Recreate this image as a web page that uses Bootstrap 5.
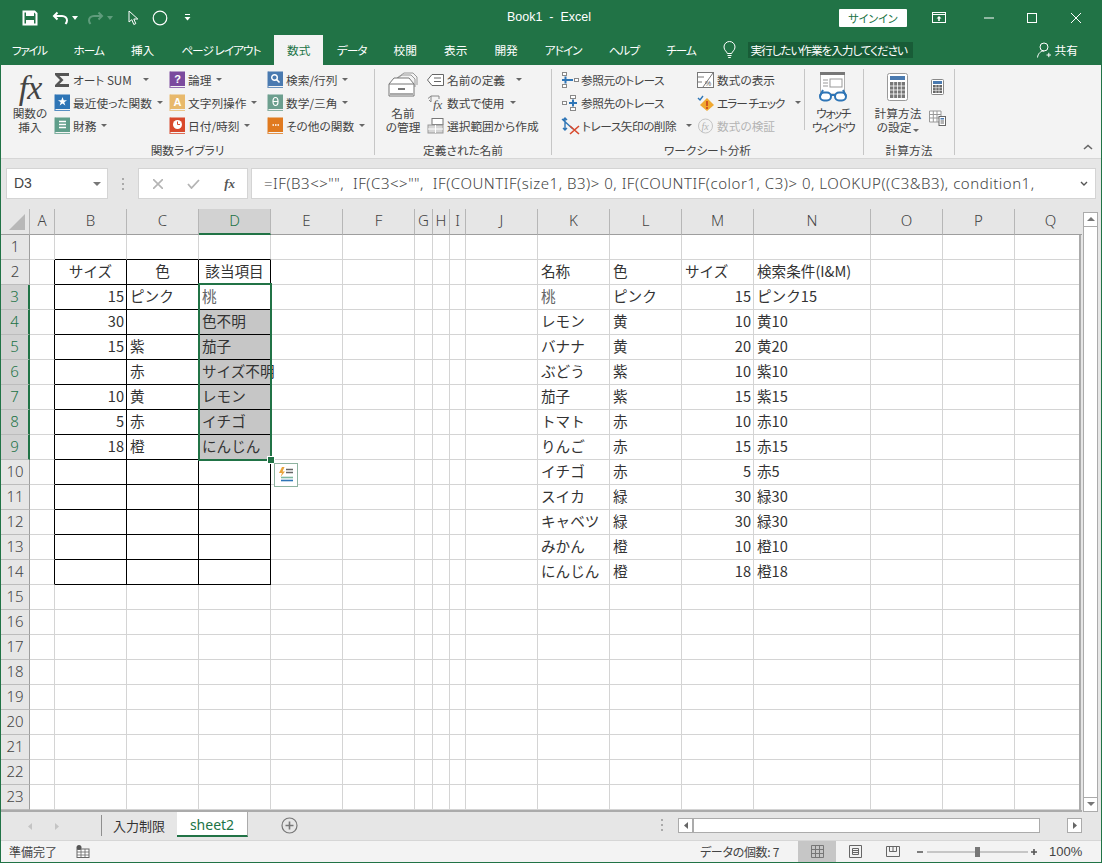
<!DOCTYPE html>
<html lang="ja">
<head>
<meta charset="UTF-8">
<title>Book1 - Excel</title>
<link href="https://cdn.jsdelivr.net/npm/bootstrap@5.3.0/dist/css/bootstrap.min.css" rel="stylesheet">
<style>
html, body { height: 100%; overflow: hidden; }
body { font-family: "Noto Sans CJK JP", sans-serif; font-size: 12px; color: #333; background: #f3f3f3; }
svg { display: block; flex: none; }

.xl-window { width: 1102px; height: 863px; border: solid #217346; border-width: 0 1px 1px 1px; display: flex; flex-direction: column; }

/* title bar */
.xl-title { height: 35px; background: #217346; color: #fff; margin: 0 -1px; position: relative; }
.qa-save { margin-left: 22px; }
.qa-undo { margin-left: 14px; }
.qa-caret { margin-left: 3px; }
.qa-redo { margin-left: 9px; }
.qa-cursor { margin-left: 15px; }
.qa-circle { margin-left: 13px; }
.qa-more { margin-left: 16px; }
.xl-doc { position: absolute; left: 0; right: 4px; top: 8px; text-align: center; font-family: "Liberation Sans", sans-serif; font-size: 12.5px; }
.xl-signin { margin-left: auto; width: 68px; height: 18px; background: #fff; color: #217346; text-align: center; line-height: 18px; font-size: 11px; font-feature-settings: "palt"; border-radius: 1px; }
.win-opt { margin-left: 25px; }
.win-min { margin-left: 38px; }
.win-max { margin-left: 33px; }
.win-close { margin-left: 34px; margin-right: 21px; }

/* tabs */
.xl-tabs { height: 30px; background: #217346; color: #fff; margin: 0 -1px; font-size: 11.7px; font-feature-settings: "palt"; align-items: stretch; }
.xl-tab { padding: 0 13.5px; line-height: 30px; white-space: nowrap; }
.xl-tab-first { margin-left: -1.5px; letter-spacing: -1.5px; }
.xl-tab-kana { letter-spacing: -1px; }
.xl-tab-on { background: #f3f3f3; color: #217346; padding: 0 13px; }
.xl-bulb { margin: 6px 12px 0 14px; }
.xl-tell { background: #185c37; height: 16px; line-height: 16px; margin: 7px 0 0 0; padding: 0 2px; width: 165px; white-space: nowrap; letter-spacing: -1.1px; }
.xl-share { margin-left: auto; margin-right: 24px; line-height: 30px; }
.xl-share svg { margin: 7px 4px 0 0; }

/* ribbon */
.xl-ribbon { height: 93px; background: #f3f3f3; font-size: 11.7px; font-feature-settings: "palt"; color: #444; white-space: nowrap; }
.rb-group { display: flex; flex-direction: column; }
.rb-g1 { width: 373px; }
.rb-g2 { width: 176px; }
.rb-g3 { width: 311px; }
.rb-g4 { width: 90px; }
.rb-sep { width: 1px; height: 86px; margin-top: 4px; background: #c6c6c6; flex: none; }
.rb-sep-short { width: 1px; height: 61px; margin-top: 1px; background: #c6c6c6; flex: none; }
.rb-body { height: 76px; padding-top: 3px; display: flex; }
.rb-label { height: 17px; line-height: 17px; text-align: center; color: #444; }
.rb-big { display: flex; flex-direction: column; align-items: center; line-height: 14px; flex: none; }
.rb-col { display: flex; flex-direction: column; flex: none; }
.rb-item { height: 23px; display: flex; align-items: center; gap: 3px; }
.rb-dim { color: #b4b4b4; }
.rb-tight { letter-spacing: -1px; }
.caret-dn { display: inline-block; width: 0; height: 0; border: 3px solid transparent; border-top: 3px solid #666; border-bottom: 0; margin-left: 2px; }
.rb-fx { font-family: "Liberation Serif", serif; font-style: italic; font-size: 34px; line-height: 39px; height: 38px; color: #444; letter-spacing: -1px; }
.rb-b1 { width: 42px; margin: 0 3px 0 8px; }
.rb-c1 { width: 115px; }
.rb-c2 { width: 98px; }
.rb-b2 { width: 52px; margin: 0 0 0 2px; }
.rb-c3 { margin-left: -2px; }
.rb-b2 svg { margin: 4px 0 8px; }
.rb-c4 { width: 136px; margin-left: 9px; }
.rb-c4 .rb-item { gap: 2px; letter-spacing: -.5px; }
.rb-c5 { width: 107px; }
.rb-b3 { width: 56px; letter-spacing: -1.5px; }
.rb-b3 svg { margin: 4px 0; }
.rb-b4 { width: 62px; margin-left: 3px; }
.rb-b4 svg { margin: 5px 0 4px; }
.rb-c6 { padding-top: 11px; gap: 15px; align-items: center; width: 17px; }
.rb-book-purple { color: #7b4a9e; }
.rb-book-blue { color: #2e75b6; }
.rb-book-teal { color: #5f9e8a; }
.rb-book-tan { color: #e8b96c; }
.rb-book-red { color: #d8492c; }
.rb-book-slate { color: #4a7ab0; }
.rb-book-sage { color: #6d9f8f; }
.rb-book-orange { color: #e07a1f; }
.rb-glyph { fill: #fff; font-size: 11px; font-family: "Liberation Sans", sans-serif; font-weight: 700; text-anchor: middle; }
.rb-close { margin: 79px 0 0 auto; }
.rb-close svg { margin-right: 8px; }

/* formula bar */
.xl-band { height: 10px; background: #e6e6e6; border-top: 1px solid #d6d6d6; }
.xl-fbar { height: 32px; background: #e6e6e6; }
.fb-box { background: #fff; border: 1px solid #d4d4d4; height: 31px; }
.fb-name { width: 102px; margin-left: 5px; padding: 0 6px 0 7px; font-family: "Liberation Sans", sans-serif; font-size: 14px; color: #444; }
.fb-grip { width: 30px; }
.fb-grip svg { margin: auto; }
.fb-btns { width: 110px; padding: 0 10px; color: #aaa; }
.fb-fx { margin-left: auto; margin-right: 2px; font-family: "Liberation Serif", serif; font-style: italic; font-weight: 700; font-size: 13px; color: #555; }
.fb-input { width: 845px; margin-left: 3px; padding: 0 7px 0 12px; color: #444; white-space: nowrap; overflow: hidden; }
.fb-text { flex: 1; overflow: hidden; font-family: "Noto Sans", sans-serif; font-size: 15px; font-weight: 300; letter-spacing: .52px; }
.fb-gap { height: 9px; background: #e6e6e6; }

/* sheet */
.xl-body { height: 603px; background: #e6e6e6; }
.xl-grid-wrap { width: 1081px; height: 603px; overflow: hidden; position: relative; flex: none; }
.xl-sheet { table-layout: fixed; border-collapse: separate; border-spacing: 0; width: 1086px; font-size: 14.6px; color: #333; }
.xl-sheet td, .xl-sheet th { height: 25px; padding: 0 0 2px 3px; font-weight: 400; border: solid #d4d4d4; border-width: 0 1px 1px 0; background: #fff; white-space: nowrap; overflow: visible; line-height: 22px; }
.xl-sheet thead th { height: 26px; background: #e6e6e6; border-color: #b6b6b6 #b6b6b6 #9e9e9e; font-size: 15px; text-align: center; padding: 0 0 3px; color: #444; font-family: "Noto Sans", sans-serif; font-weight: 300; }
.xl-sheet tbody th { background: #e6e6e6; border-color: #bcbcbc #9e9e9e #bcbcbc; text-align: center; padding: 0 0 2px; font-size: 15px; color: #444; font-family: "Noto Sans", sans-serif; font-weight: 300; }
.xl-sheet thead th.xh-corner { position: relative; }
.xh-tri { position: absolute; right: 4px; bottom: 4px; width: 0; height: 0; border: solid transparent; border-width: 0 0 16px 16px; border-bottom-color: #b8b8b8; }
.xl-sheet thead th.xh-on { background: #d2d2d2; color: #217346; border-bottom: 2px solid #217346; padding-bottom: 2px; }
.xl-sheet tbody th.xh-on { background: #d2d2d2; color: #217346; border-right: 2px solid #217346; }
.xl-sheet td.xc-num { text-align: right; padding: 0 2px 2px 0; }
.xl-sheet td.xc-mid { text-align: center; padding: 0 0 2px; }
.xl-sheet td.xc-box { border-right-color: #000; border-bottom-color: #000; }
.xl-sheet td.xc-edge-r { border-right-color: #000; }
.xl-sheet td.xc-edge-b { border-bottom-color: #000; }
.xl-sheet td.xc-sel { background: #c6c6c6; }
.xl-sheet td.xc-soft { color: #666; }
.sel-frame { position: absolute; left: 197px; top: 74px; width: 74px; height: 178px; border: 2px solid #217346; pointer-events: none; }
.sel-grip { position: absolute; left: 266px; top: 247px; width: 8px; height: 8px; background: #217346; border: 1px solid #fff; }
.sel-tag { position: absolute; left: 273px; top: 254px; width: 24px; height: 24px; background: #fff; border: 1px solid #8fb3a0; padding: 3px; }
.grid-end-r { position: absolute; right: 0; top: 26px; bottom: 0; width: 3px; background: #e6e6e6; border-left: 2px solid #ababab; }
.grid-end-b { position: absolute; left: 0; right: 0; bottom: 0; height: 2px; background: #ababab; }
.xl-vbar { width: 15px; margin-left: 1px; height: 600px; margin-top: 3px; background: #fff; border: solid #ababab; border-width: 0 1px 0 1px; position: relative; }
.sb-up, .sb-dn { height: 15px; background: #fff; border: 1px solid #ababab; margin: 0 -1px; }
.sb-up svg, .sb-dn svg { margin: 4px auto; }
.sb-thumb { flex: 1; }

/* sheet tabs */
.xl-sheetbar { height: 28px; background: #e6e6e6; }
.st-nav { width: 100px; padding-left: 27px; gap: 23px; align-self: center; }
.st-tab { padding: 0 11px; line-height: 27px; border-left: 1px solid #8f8f8f; height: 21px; margin-top: 3px; font-size: 13px; width: 76px; white-space: nowrap; }
.st-tab span { position: relative; top: -3px; }
.st-on { height: 25px; margin: 0; width: 71px; padding: 0; text-align: center; background: #fff; color: #217346; border-bottom: 2px solid #217346; border-right: 1px solid #ababab; font-family: "Noto Sans", sans-serif; font-size: 14px; line-height: 25px; }
.st-plus { margin: 5px 0 0 33px; }
.st-grip { margin: 7px 0 0 363px; }
.st-hbar { width: 404px; height: 15px; margin: 6px 0 0 14px; }
.sb-box { width: 15px; height: 15px; background: #fff; border: 1px solid #ababab; flex: none; }
.sb-box svg { margin: 3px auto; }
.sb-thumbh { width: 347px; height: 15px; background: #fff; border: 1px solid #ababab; flex: none; }

/* status */
.xl-status { height: 22px; background: #f3f3f3; border-top: 1px solid #d6d6d6; font-size: 12px; font-feature-settings: "palt"; color: #444; line-height: 21px; white-space: nowrap; }
.su-ready { margin-left: 8px; width: 67px; }
.su-count { margin-left: 610px; width: 98px; letter-spacing: -.3px; }
.su-view { width: 38px; height: 21px; display: flex; align-items: center; justify-content: center; }
.su-view-on { background: #c6c6c6; }
.su-zoom { margin-left: 5px; }
.su-pct { margin-left: 10px; font-family: "Liberation Sans", sans-serif; font-size: 13px; }
</style>
</head>
<body>
<svg width="0" height="0" class="position-absolute">
  <symbol id="bk" viewBox="0 0 16 18"><rect x="1" y="0.5" width="15" height="14.5" fill="currentColor"/><path d="M1 0.5V16.5H16" fill="none" stroke="currentColor" stroke-width="1.2" opacity=".8"/></symbol>
</svg>

<div class="xl-window">
  <!-- title bar -->
  <div class="xl-title d-flex align-items-center">
    <svg class="qa-save" width="16" height="16" viewBox="0 0 16 16"><path d="M1.5 1.5H12.5L14.5 3.5V14.5H1.5Z" fill="none" stroke="#fff" stroke-width="2"/><rect x="4" y="2" width="8" height="4" fill="#fff"/><rect x="4" y="10" width="8" height="4" fill="#fff"/></svg>
    <svg class="qa-undo" width="17" height="16" viewBox="0 0 17 16"><path d="M5.5 2.5L2 6L5.5 9.5M2.5 6H10C13 6 15 8 15 10.5C15 12 14.3 13 13.5 14" fill="none" stroke="#fff" stroke-width="2"/></svg>
    <svg class="qa-caret" width="6" height="4" viewBox="0 0 6 4"><path d="M0 0H6L3 4Z" fill="#fff"/></svg>
    <svg class="qa-redo" width="17" height="16" viewBox="0 0 17 16"><path d="M11.5 2.5L15 6L11.5 9.5M14.5 6H7C4 6 2 8 2 10.5C2 12 2.7 13 3.5 14" fill="none" stroke="#5f9c7c" stroke-width="2"/></svg>
    <svg class="qa-caret" width="6" height="4" viewBox="0 0 6 4"><path d="M0 0H6L3 4Z" fill="#5f9c7c"/></svg>
    <svg class="qa-cursor" width="11" height="16" viewBox="0 0 11 16"><path d="M1 1V12L3.8 9.7L5.8 14.5L7.8 13.6L5.8 9H9.8Z" fill="none" stroke="#fff" stroke-width="1"/></svg>
    <svg class="qa-circle" width="16" height="16" viewBox="0 0 16 16"><circle cx="8" cy="8" r="6.8" fill="none" stroke="#fff" stroke-width="1.2"/></svg>
    <svg class="qa-more" width="7" height="7" viewBox="0 0 7 7"><path d="M1 .5H6" stroke="#fff"/><path d="M0.5 3H6.5L3.5 6.5Z" fill="#fff"/></svg>
    <div class="xl-doc">Book1 &nbsp;-&nbsp; Excel</div>
    <div class="xl-signin position-relative">サインイン</div>
    <svg class="win-opt position-relative" width="14" height="12" viewBox="0 0 14 12"><rect x=".5" y=".5" width="13" height="10" fill="none" stroke="#fff"/><path d="M.5 2.5H13.5" stroke="#fff"/><path d="M7 4L9.5 6.5H7.8V9H6.2V6.5H4.5Z" fill="#fff"/></svg>
    <svg class="win-min position-relative" width="10" height="2" viewBox="0 0 10 2"><path d="M0 1H10" stroke="#fff"/></svg>
    <svg class="win-max position-relative" width="10" height="10" viewBox="0 0 10 10"><rect x=".5" y=".5" width="9" height="9" fill="none" stroke="#fff"/></svg>
    <svg class="win-close position-relative" width="10" height="10" viewBox="0 0 10 10"><path d="M0 0L10 10M10 0L0 10" stroke="#fff"/></svg>
  </div>

  <!-- tabs -->
  <div class="xl-tabs d-flex">
    <div class="xl-tab xl-tab-first">ファイル</div>
    <div class="xl-tab xl-tab-kana">ホーム</div>
    <div class="xl-tab">挿入</div>
    <div class="xl-tab xl-tab-kana">ページ レイアウト</div>
    <div class="xl-tab xl-tab-on">数式</div>
    <div class="xl-tab xl-tab-kana">データ</div>
    <div class="xl-tab">校閲</div>
    <div class="xl-tab">表示</div>
    <div class="xl-tab">開発</div>
    <div class="xl-tab xl-tab-kana">アドイン</div>
    <div class="xl-tab xl-tab-kana">ヘルプ</div>
    <div class="xl-tab xl-tab-kana">チーム</div>
    <svg class="xl-bulb" width="13" height="18" viewBox="0 0 13 18"><path d="M4.3 12.5C4 10.5 1 9.5 1 6A5.5 5.5 0 0 1 12 6C12 9.5 9 10.5 8.7 12.5ZM4.5 14.5H8.5M5.2 16.5H7.8" fill="none" stroke="#fff"/></svg>
    <div class="xl-tell">実行したい作業を入力してください</div>
    <div class="xl-share d-flex">
      <svg width="14" height="16" viewBox="0 0 14 16"><circle cx="7" cy="5" r="4" fill="none" stroke="#fff"/><path d="M.5 15.5C1 11.5 3.5 9 7 9M9.5 13H14M11.8 10.8V15.2" fill="none" stroke="#fff"/></svg>
      <span>共有</span>
    </div>
  </div>

  <!-- ribbon -->
  <div class="xl-ribbon d-flex">
    <div class="rb-group rb-g1">
      <div class="rb-body">
        <div class="rb-big rb-b1"><div class="rb-fx">fx</div><div>関数の</div><div>挿入</div></div>
        <div class="rb-col rb-c1">
          <div class="rb-item"><svg width="16" height="16" viewBox="0 0 16 16"><path d="M1 1H15V4H5.5L9.5 8L5.5 12H15V15H1V13L6 8L1 3Z" fill="#555"/></svg><span>オート SUM</span><i class="caret-dn ms-2"></i></div>
          <div class="rb-item"><svg class="rb-book-blue" width="16" height="18" viewBox="0 0 16 18"><use href="#bk"/><path d="M8.5 3L9.7 6.2H13L10.3 8.2L11.3 11.5L8.5 9.5L5.7 11.5L6.7 8.2L4 6.2H7.3Z" fill="#fff"/></svg><span>最近使った関数</span><i class="caret-dn"></i></div>
          <div class="rb-item"><svg class="rb-book-teal" width="16" height="18" viewBox="0 0 16 18"><use href="#bk"/><path d="M5 4.5H12M5 7.5H12M5 10.5H12" stroke="#fff" stroke-width="1.6"/></svg><span>財務</span><i class="caret-dn"></i></div>
        </div>
        <div class="rb-col rb-c2">
          <div class="rb-item"><svg class="rb-book-purple" width="16" height="18" viewBox="0 0 16 18"><use href="#bk"/><text class="rb-glyph" x="8.5" y="12">?</text></svg><span>論理</span><i class="caret-dn"></i></div>
          <div class="rb-item"><svg class="rb-book-tan" width="16" height="18" viewBox="0 0 16 18"><use href="#bk"/><text class="rb-glyph" x="8.5" y="12">A</text></svg><span>文字列操作</span><i class="caret-dn"></i></div>
          <div class="rb-item"><svg class="rb-book-red" width="16" height="18" viewBox="0 0 16 18"><use href="#bk"/><circle cx="8.5" cy="7.5" r="4.5" fill="#fff"/><path d="M8.5 4.5V7.5H11" fill="none" stroke="#d8492c"/></svg><span>日付/時刻</span><i class="caret-dn"></i></div>
        </div>
        <div class="rb-col">
          <div class="rb-item"><svg class="rb-book-slate" width="16" height="18" viewBox="0 0 16 18"><use href="#bk"/><circle cx="7.5" cy="6.5" r="2.8" fill="none" stroke="#fff" stroke-width="1.4"/><path d="M9.5 8.5L12.5 11.5" stroke="#fff" stroke-width="1.6"/></svg><span>検索/行列</span><i class="caret-dn"></i></div>
          <div class="rb-item"><svg class="rb-book-sage" width="16" height="18" viewBox="0 0 16 18"><use href="#bk"/><ellipse cx="8.5" cy="7.5" rx="2.5" ry="4" fill="none" stroke="#fff" stroke-width="1.2"/><path d="M6 7.5H11" stroke="#fff"/></svg><span>数学/三角</span><i class="caret-dn"></i></div>
          <div class="rb-item"><svg class="rb-book-orange" width="16" height="18" viewBox="0 0 16 18"><use href="#bk"/><path d="M5.5 8H7M8 8H9.5M10.5 8H12" stroke="#fff" stroke-width="1.4"/></svg><span>その他の関数</span><i class="caret-dn"></i></div>
        </div>
      </div>
      <div class="rb-label">関数ライブラリ</div>
    </div>
    <div class="rb-sep"></div>

    <div class="rb-group rb-g2">
      <div class="rb-body">
        <div class="rb-big rb-b2">
          <svg width="30" height="26" viewBox="0 0 30 26"><path d="M9 6L16 1H25L29 5V13M7 8L14 3H23L27 7V15" fill="none" stroke="#999"/><path d="M1 12L6 6H21L26 12V24H1Z" fill="#fff" stroke="#777"/><path d="M1 12H26" stroke="#777"/><path d="M10 16H17V18H10Z" fill="#777"/><rect x="2" y="21" width="23" height="2" fill="#aaa"/></svg>
          <div>名前</div><div>の管理</div>
        </div>
        <div class="rb-col rb-c3">
          <div class="rb-item"><svg width="17" height="12" viewBox="0 0 17 12"><path d="M5 .5H16.5V11.5H5L.5 6Z" fill="#fff" stroke="#666"/><path d="M7 4H14M7 7.5H14" stroke="#666"/></svg><span>名前の定義</span><i class="caret-dn ms-2"></i></div>
          <div class="rb-item"><svg width="17" height="16" viewBox="0 0 17 16"><path d="M1 3.5L4 1H12V4M4 1V7L2 5" fill="none" stroke="#888"/><text x="6" y="14" font-family="Liberation Serif" font-style="italic" font-size="13" fill="#555">fx</text></svg><span>数式で使用</span><i class="caret-dn"></i></div>
          <div class="rb-item"><svg width="17" height="16" viewBox="0 0 17 16"><rect x="5" y=".5" width="11" height="6" fill="#fff" stroke="#777"/><rect x="1" y="7" width="15" height="8" fill="#d6d6d6" stroke="#999"/><path d="M8.5 7V15M1 11H16" stroke="#fff"/></svg><span>選択範囲から作成</span></div>
        </div>
      </div>
      <div class="rb-label">定義された名前</div>
    </div>
    <div class="rb-sep"></div>

    <div class="rb-group rb-g3">
      <div class="rb-body">
        <div class="rb-col rb-c4">
          <div class="rb-item"><svg width="18" height="18" viewBox="0 0 18 18"><g fill="#fff" stroke="#888"><rect x="1.5" y="1.5" width="4" height="3"/><rect x="1.5" y="13.5" width="4" height="3"/><rect x="13.5" y="7.5" width="4" height="3"/></g><path d="M1 9H8M4.5 5.5V12.5M8 9H12" stroke="#2e75b6" stroke-width="2" stroke-dasharray="7 1"/></svg><span>参照元のトレース</span></div>
          <div class="rb-item"><svg width="18" height="18" viewBox="0 0 18 18"><g fill="#fff" stroke="#888"><rect x="9.5" y="1.5" width="5" height="3"/><rect x="9.5" y="13.5" width="5" height="3"/><rect x="1.5" y="7.5" width="4" height="3"/></g><path d="M8 9H16M12 5.5V12.5" stroke="#2e75b6" stroke-width="2"/></svg><span>参照先のトレース</span></div>
          <div class="rb-item"><svg width="19" height="18" viewBox="0 0 19 18"><path d="M4 1V13M2 3L4 1L6 3M2 11L4 13L6 11M1 2L12 12" fill="none" stroke="#2e75b6" stroke-width="1.4"/><path d="M9 9L18 17M18 9L9 17" stroke="#d8492c" stroke-width="1.6"/></svg><span>トレース矢印の削除</span><i class="caret-dn ms-2"></i></div>
        </div>
        <div class="rb-col rb-c5">
          <div class="rb-item"><svg width="17" height="16" viewBox="0 0 17 16"><rect x=".5" y=".5" width="16" height="15" fill="#fff" stroke="#777"/><path d="M16 1L6 15M1 5H7M1 10H5" stroke="#777"/><text x="8" y="14" font-size="7" fill="#555" font-family="Liberation Sans">%</text></svg><span>数式の表示</span></div>
          <div class="rb-item"><svg width="17" height="16" viewBox="0 0 17 16"><path d="M1 3L3 5L6 1" fill="none" stroke="#2e75b6" stroke-width="1.4"/><path d="M10 3L17 10L10 16L3 10Z" fill="#f0a830"/><path d="M10 6V11M10 12V14" stroke="#c8401c" stroke-width="1.6"/></svg><span class="rb-tight">エラー チェック</span><i class="caret-dn ms-2"></i></div>
          <div class="rb-item rb-dim"><svg width="17" height="16" viewBox="0 0 17 16"><circle cx="8.5" cy="8" r="7" fill="none" stroke="#c4c4c4"/><text x="4.5" y="12" font-family="Liberation Serif" font-style="italic" font-size="10" fill="#b4b4b4">fx</text></svg><span>数式の検証</span></div>
        </div>
        <div class="rb-sep-short"></div>
        <div class="rb-big rb-b3">
          <svg width="30" height="30" viewBox="0 0 30 30"><rect x="2.5" y="1" width="24" height="21" fill="#fff" stroke="#b0b0b0"/><rect x="2" y="0" width="25" height="3" fill="#777"/><path d="M5 8H10M5 11H10M5 14H10" stroke="#999"/><rect x="12" y="7" width="12" height="8" fill="none" stroke="#999"/><rect x="2" y="20.5" width="11" height="8" rx="4" fill="#fff" stroke="#2e75b6" stroke-width="2"/><rect x="17" y="20.5" width="11" height="8" rx="4" fill="#fff" stroke="#2e75b6" stroke-width="2"/><path d="M13 23H17M2 24L5 18M28 24L25 18" fill="none" stroke="#2e75b6" stroke-width="2"/></svg>
          <div>ウォッチ</div><div>ウィンドウ</div>
        </div>
      </div>
      <div class="rb-label">ワークシート分析</div>
    </div>
    <div class="rb-sep"></div>

    <div class="rb-group rb-g4">
      <div class="rb-body">
        <div class="rb-big rb-b4">
          <svg width="22" height="29" viewBox="0 0 22 29"><rect x=".5" y=".5" width="20" height="27" rx="2" fill="#fff" stroke="#999"/><rect x="3" y="3" width="15" height="4" fill="#4a7ab0"/><path d="M3 9H18V25H3Z" fill="#777"/><path d="M6.7 9V25M10.5 9V25M14.3 9V25M3 13H18M3 17H18M3 21H18" stroke="#fff" stroke-width=".8"/></svg>
          <div>計算方法</div><div>の設定<i class="caret-dn"></i></div>
        </div>
        <div class="rb-col rb-c6">
          <svg width="13" height="16" viewBox="0 0 13 16"><rect x=".5" y=".5" width="12" height="15" rx="1" fill="#fff" stroke="#888"/><rect x="2" y="2" width="9" height="3" fill="#4a7ab0"/><path d="M2 6H11V14H2Z" fill="#666"/><path d="M5 6V14M8 6V14M2 8.7H11M2 11.4H11" stroke="#fff" stroke-width=".6"/></svg>
          <svg width="17" height="16" viewBox="0 0 17 16"><path d="M.5 1H12V12H.5ZM.5 4.5H12M.5 8H12M4.3 1V12M8 1V12" fill="#fff" stroke="#999"/><rect x="10" y="6.5" width="6.5" height="9" fill="#fff" stroke="#666"/><rect x="11.5" y="8" width="3.5" height="1.5" fill="#4a7ab0"/><path d="M11.5 11H15M11.5 13H15" stroke="#666"/></svg>
        </div>
      </div>
      <div class="rb-label">計算方法</div>
    </div>
    <div class="rb-sep"></div>
    <div class="rb-close"><svg width="10" height="6" viewBox="0 0 10 6"><path d="M1 5L5 1.5L9 5" fill="none" stroke="#666" stroke-width="1.6"/></svg></div>
  </div>
  <div class="xl-band"></div>

  <!-- formula bar -->
  <div class="xl-fbar d-flex">
    <div class="fb-box fb-name d-flex align-items-center"><span>D3</span><svg class="ms-auto" width="8" height="4" viewBox="0 0 8 4"><path d="M0 0H8L4 4Z" fill="#777"/></svg></div>
    <div class="fb-grip d-flex"><svg width="3" height="12" viewBox="0 0 3 12"><path d="M1 0V2M1 5V7M1 10V12" stroke="#aaa" stroke-width="2"/></svg></div>
    <div class="fb-box fb-btns d-flex align-items-center gap-4">
      <svg class="ms-1" width="10" height="10" viewBox="0 0 10 10"><path d="M0 0L10 10M10 0L0 10" stroke="#b4b4b4" stroke-width="1.6"/></svg>
      <svg width="13" height="10" viewBox="0 0 13 10"><path d="M1 5L4.5 9L12 1" fill="none" stroke="#b4b4b4" stroke-width="1.8"/></svg>
      <span class="fb-fx">fx</span>
    </div>
    <div class="fb-box fb-input d-flex align-items-center">
      <div class="fb-text">=IF(B3&lt;&gt;"",&nbsp; IF(C3&lt;&gt;"",&nbsp; IF(COUNTIF(size1, B3)&gt; 0, IF(COUNTIF(color1, C3)&gt; 0, LOOKUP((C3&amp;B3), condition1,</div>
      <svg width="8" height="5" viewBox="0 0 8 5"><path d="M1 1L4 4L7 1" fill="none" stroke="#555" stroke-width="1.4"/></svg>
    </div>
  </div>
  <div class="fb-gap"></div>

  <!-- sheet -->
  <div class="xl-body d-flex">
    <div class="xl-grid-wrap">
      <table class="xl-sheet" id="sheet"></table>
      <div class="sel-frame"></div>
      <div class="sel-grip"></div>
      <div class="sel-tag"><svg width="16" height="16" viewBox="0 0 16 16"><path d="M4 0L1 6H4L2.5 10L7 4.5H4.5L6.5 0Z" fill="#e8a33a"/><path d="M8 2.5H15M8 5.5H15" stroke="#666" stroke-width="1.4"/><path d="M3 10.5H15" stroke="#7fb8a0" stroke-width="1.6"/><path d="M3 13.5H15" stroke="#2e75b6" stroke-width="1.6"/></svg></div>
      <div class="grid-end-r"></div>
      <div class="grid-end-b"></div>
    </div>
    <div class="xl-vbar d-flex flex-column">
      <div class="sb-up"><svg width="8" height="4" viewBox="0 0 8 4"><path d="M4 0L8 4H0Z" fill="#777"/></svg></div>
      <div class="sb-thumb"></div>
      <div class="sb-dn"><svg width="8" height="4" viewBox="0 0 8 4"><path d="M0 0H8L4 4Z" fill="#777"/></svg></div>
    </div>
  </div>

  <!-- sheet tabs -->
  <div class="xl-sheetbar d-flex">
    <div class="st-nav d-flex">
      <svg width="4" height="7" viewBox="0 0 4 7"><path d="M4 0V7L0 3.5Z" fill="#c4c4c4"/></svg>
      <svg width="4" height="7" viewBox="0 0 4 7"><path d="M0 0V7L4 3.5Z" fill="#c4c4c4"/></svg>
    </div>
    <div class="st-tab"><span>入力制限</span></div>
    <div class="st-on">sheet2</div>
    <svg class="st-plus" width="17" height="17" viewBox="0 0 17 17"><circle cx="8.5" cy="8.5" r="7.5" fill="none" stroke="#777" stroke-width="1.2"/><path d="M8.5 4.5V12.5M4.5 8.5H12.5" stroke="#777" stroke-width="1.6"/></svg>
    <svg class="st-grip" width="3" height="12" viewBox="0 0 3 12"><path d="M1 0V2M1 5V7M1 10V12" stroke="#aaa" stroke-width="2"/></svg>
    <div class="st-hbar d-flex">
      <div class="sb-box"><svg width="4" height="7" viewBox="0 0 4 7"><path d="M4 0V7L0 3.5Z" fill="#666"/></svg></div>
      <div class="sb-thumbh"></div>
      <div class="sb-box ms-auto"><svg width="4" height="7" viewBox="0 0 4 7"><path d="M0 0V7L4 3.5Z" fill="#666"/></svg></div>
    </div>
  </div>

  <!-- status bar -->
  <div class="xl-status d-flex align-items-center">
    <div class="su-ready">準備完了</div>
    <svg width="14" height="13" viewBox="0 0 14 13"><rect x="1" y="4" width="12" height="8.5" fill="#fff" stroke="#666"/><path d="M1 7H13M1 10H13M5 4V12M9 4V12" stroke="#666" stroke-width=".8"/><circle cx="3" cy="2.5" r="2.5" fill="#555"/></svg>
    <div class="su-count">データの個数: 7</div>
    <div class="su-view su-view-on"><svg width="13" height="13" viewBox="0 0 13 13"><path d="M.5 .5H12.5V12.5H.5ZM.5 4.5H12.5M.5 8.5H12.5M4.5 .5V12.5M8.5 .5V12.5" fill="none" stroke="#777"/></svg></div>
    <div class="su-view"><svg width="13" height="13" viewBox="0 0 13 13"><path d="M.5 .5H12.5V12.5H.5ZM3.5 3.5H9.5V9.5H3.5ZM3.5 5.5H9.5M3.5 7.5H9.5" fill="none" stroke="#666"/></svg></div>
    <div class="su-view"><svg width="14" height="11" viewBox="0 0 14 11"><path d="M.5 .5H13.5V10.5H.5ZM7 .5V5.5M3.5 .5V5.5H10.5V.5" fill="none" stroke="#666"/></svg></div>
    <svg class="su-zoom" width="122" height="12" viewBox="0 0 122 12"><path d="M0 6H6M114 6H120M117 3V9" stroke="#555" stroke-width="1.6"/><path d="M10 6H111" stroke="#999"/><rect x="58" y="1" width="5" height="10" fill="#777"/></svg>
    <div class="su-pct">100%</div>
  </div>
</div>

<script>
// column widths of the sheet, header first
const widths = [29, 25, 72, 72, 72, 72, 72, 18, 17, 16, 72, 72, 72, 72, 117, 72, 72, 72];
const letters = ["", "A", "B", "C", "D", "E", "F", "G", "H", "I", "J", "K", "L", "M", "N", "O", "P", "Q"];

// cell contents: row -> column -> value
const cells = {
  2: { B: "サイズ", C: "色", D: "該当項目", K: "名称", L: "色", M: "サイズ", N: "検索条件(I&M)" },
  3: { B: 15, C: "ピンク", D: "桃", K: "桃", L: "ピンク", M: 15, N: "ピンク15" },
  4: { B: 30, D: "色不明", K: "レモン", L: "黄", M: 10, N: "黄10" },
  5: { B: 15, C: "紫", D: "茄子", K: "バナナ", L: "黄", M: 20, N: "黄20" },
  6: { C: "赤", D: "サイズ不明", K: "ぶどう", L: "紫", M: 10, N: "紫10" },
  7: { B: 10, C: "黄", D: "レモン", K: "茄子", L: "紫", M: 15, N: "紫15" },
  8: { B: 5, C: "赤", D: "イチゴ", K: "トマト", L: "赤", M: 10, N: "赤10" },
  9: { B: 18, C: "橙", D: "にんじん", K: "りんご", L: "赤", M: 15, N: "赤15" },
  10: { K: "イチゴ", L: "赤", M: 5, N: "赤5" },
  11: { K: "スイカ", L: "緑", M: 30, N: "緑30" },
  12: { K: "キャベツ", L: "緑", M: 30, N: "緑30" },
  13: { K: "みかん", L: "橙", M: 10, N: "橙10" },
  14: { K: "にんじん", L: "橙", M: 18, N: "橙18" },
};

const sheet = document.getElementById("sheet");
let html = "<colgroup>" + widths.map(w => `<col width="${w}">`).join("") + "</colgroup><thead><tr>";
letters.forEach((l, i) => {
  if (i === 0) html += '<th class="xh-corner"><span class="xh-tri"></span></th>';
  else html += `<th class="${l === "D" ? "xh-on" : ""}">${l}</th>`;
});
html += "</tr></thead><tbody>";

// row 24 only shows its top edge, so it gets no label
for (let r = 1; r <= 24; r++) {
  html += `<tr><th class="${r >= 3 && r <= 9 ? "xh-on" : ""}">${r < 24 ? r : ""}</th>`;
  letters.slice(1).forEach(l => {
    const v = (cells[r] || {})[l];
    const cls = [];
    const inBox = "BCD".includes(l) && r >= 2 && r <= 14;
    if (inBox) cls.push("xc-box");
    if (l === "A" && r >= 2 && r <= 14) cls.push("xc-edge-r");
    if ("BCD".includes(l) && r === 1) cls.push("xc-edge-b");
    if (l === "D" && r >= 4 && r <= 9) cls.push("xc-sel");
    if (typeof v === "number") cls.push("xc-num");
    if (r === 2 && inBox) cls.push("xc-mid");
    if (v === "桃") cls.push("xc-soft");
    html += `<td class="${cls.join(" ")}">${v === undefined ? "" : String(v).replace("&", "&amp;")}</td>`;
  });
  html += "</tr>";
}
sheet.innerHTML = html + "</tbody>";
</script>
<script src="https://cdn.jsdelivr.net/npm/bootstrap@5.3.0/dist/js/bootstrap.bundle.min.js"></script>
</body>
</html>
